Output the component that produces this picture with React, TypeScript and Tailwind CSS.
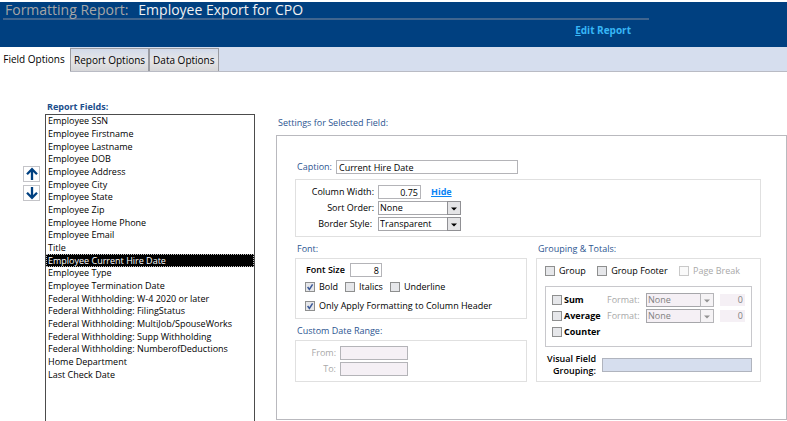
import { FC, ReactNode, useState } from "react";
import clsx from "clsx";

const FIELDS = [
	"Employee SSN",
	"Employee Firstname",
	"Employee Lastname",
	"Employee DOB",
	"Employee Address",
	"Employee City",
	"Employee State",
	"Employee Zip",
	"Employee Home Phone",
	"Employee Email",
	"Title",
	"Employee Current Hire Date",
	"Employee Type",
	"Employee Termination Date",
	"Federal Withholding: W-4 2020 or later",
	"Federal Withholding: FilingStatus",
	"Federal Withholding: MultiJob/SpouseWorks",
	"Federal Withholding: Supp Withholding",
	"Federal Withholding: NumberofDeductions",
	"Home Department",
	"Last Check Date",
];

const TABS = ["Field Options", "Report Options", "Data Options"];

const inputStyle =
	"h-[14px] border border-[#b4b4b8] bg-white px-0.5 leading-3 outline-none disabled:bg-[#f5f0f5]";

const Check: FC<{
	label: string;
	checked?: boolean;
	disabled?: boolean;
	bold?: boolean;
}> = ({ label, checked, disabled, bold }) => (
	<label
		className={clsx(
			"flex items-center whitespace-nowrap",
			bold ? "gap-0.5 font-bold text-black" : "gap-1",
			disabled && "text-[#a9a9a9]"
		)}
	>
		<span className="relative flex">
			<input
				type="checkbox"
				defaultChecked={checked}
				disabled={disabled}
				className="peer size-[10px] appearance-none border border-[#8e8f8f] bg-[#e6e7ea] disabled:border-[#c9c9c9] disabled:bg-[#fafafa]"
			/>
			<svg
				viewBox="0 0 10 10"
				className="pointer-events-none absolute inset-0 hidden size-[10px] peer-checked:block"
			>
				<path
					d="M2.6 5 4.4 7.4 7.6 2.4"
					fill="none"
					stroke="#3b5998"
					strokeWidth="1.5"
				/>
			</svg>
		</span>
		{label}
	</label>
);

const Select: FC<{
	id: string;
	value: string;
	options: string[];
	disabled?: boolean;
	className: string;
}> = ({ id, value, options, disabled, className }) => (
	<div className={clsx("relative flex", className)}>
		<select
			id={id}
			defaultValue={value}
			disabled={disabled}
			className="h-[14px] w-full appearance-none border border-[#a6a6aa] bg-white pl-px leading-3 outline-none disabled:bg-[#f5f0f5] disabled:text-[#808080] disabled:opacity-100"
		>
			{options.map((option) => (
				<option key={option}>{option}</option>
			))}
		</select>
		<span
			className={clsx(
				"pointer-events-none absolute inset-y-0 right-0 flex w-[14px] items-center justify-center border",
				disabled
					? "border-[#b5b5b8] bg-[#f5f3f5] text-[#929292]"
					: "border-[#909094] bg-[#e4e4e6] text-black"
			)}
		>
			<svg viewBox="0 0 6 4" className="mt-0.5 h-1 w-1.5">
				<path d="M0 0.5h6L3 3.6z" fill="currentColor" />
			</svg>
		</span>
	</div>
);

const MoveButton: FC<{ label: string; down?: boolean }> = ({ label, down }) => (
	<button
		aria-label={label}
		className="flex h-4 w-[17px] items-center justify-center border border-[#c4c4c8] bg-white"
	>
		<svg
			viewBox="0 0 14 14"
			className={clsx("size-[14px] shrink-0", down && "rotate-180")}
		>
			<path
				d="M7 13V2.2M2 7.2 7 2.2 12 7.2"
				fill="none"
				stroke="#004080"
				strokeWidth="2.3"
			/>
		</svg>
	</button>
);

const Heading: FC<{ children: ReactNode }> = ({ children }) => (
	<h2 className="px-0.5 text-[#2c5591]">{children}</h2>
);

const Total: FC<{ label: string }> = ({ label }) => {
	const id = `${label.toLowerCase()}-format`;

	return (
		<div className="flex items-center">
			<div className="w-[55px]">
				<Check label={label} bold />
			</div>
			<label htmlFor={id} className="w-[39px] text-[#a9a9a9]">
				Format:
			</label>
			<Select
				id={id}
				value="None"
				options={["None", "Currency", "Fixed"]}
				disabled
				className="w-[68px]"
			/>
			<input
				aria-label={`${label} decimals`}
				defaultValue="0"
				disabled
				className="ml-1.5 h-3 w-[25px] bg-[#f5f0f5] px-0.5 text-right text-[#808080]"
			/>
		</div>
	);
};

export default function App() {
	const [tab, setTab] = useState("Field Options");
	const [field, setField] = useState("Employee Current Hire Date");

	return (
		<div className="flex h-screen flex-col overflow-hidden bg-white pt-0.5 font-['Open_Sans',sans-serif] text-[9px] leading-[14px] text-black">
			<header className="h-[45px] shrink-0 bg-[#004080] pl-[3px]">
				<div className="w-[646px] max-w-full border-b-2 border-[#40658f]">
					<h1 className="flex h-4 items-center gap-2.5 px-0.5 text-[14px] whitespace-nowrap">
						<span className="text-[#a6a6a6]">Formatting Report:</span>
						<span className="text-[#f2f2f2]">Employee Export for CPO</span>
					</h1>
					<div className="relative">
						<a
							href="#edit"
							className="absolute top-[5px] right-[18px] text-[10px] font-bold text-[#37b6f6]"
						>
							<span className="underline">E</span>dit Report
						</a>
					</div>
				</div>
			</header>

			<nav
				role="tablist"
				className="flex h-[25px] shrink-0 border-b border-[#b9bbc4] bg-[#d6deee] text-[10px] text-black"
			>
				{TABS.map((name) => (
					<button
						key={name}
						role="tab"
						aria-selected={name === tab}
						onClick={() => setTab(name)}
						className={clsx(
							"whitespace-nowrap",
							name === tab
								? "-mb-px w-[70px] bg-white pr-0.5 pb-0.5"
								: "mt-px border border-b-0 border-[#9a9ba1] bg-linear-to-b from-[#d2daea] via-[#e6e6e8] to-[#d6d6d8] px-[3px]"
						)}
					>
						{name}
					</button>
				))}
			</nav>

			<main className="flex min-h-0 grow pl-[23px]">
				<div className="flex w-[22px] shrink-0 flex-col gap-[3px] pt-[94px]">
					<MoveButton label="Move up" />
					<MoveButton label="Move down" down />
				</div>

				<section className="flex w-[210px] shrink-0 flex-col pt-7">
					<h2 className="px-0.5 font-bold text-[#1c4e8c]">Report Fields:</h2>
					<div className="grow border border-b-0 border-[#4c4c4c]">
						<ul
							role="listbox"
							aria-label="Report Fields"
							className="grid h-[266px] auto-rows-fr"
						>
							{FIELDS.map((name) => (
								<li
									key={name}
									role="option"
									aria-selected={name === field}
									onClick={() => setField(name)}
									className={clsx(
										"flex items-center px-0.5 leading-3 whitespace-nowrap",
										name === field &&
											"bg-black text-white outline-1 -outline-offset-1 outline-dotted outline-[#c0c0c0]"
									)}
								>
									{name}
								</li>
							))}
						</ul>
					</div>
				</section>

				<section className="ml-[21px] min-w-0 grow pt-11">
					<Heading>Settings for Selected Field:</Heading>
					<div className="mt-[5px] h-[285px] border border-[#b9b9be] px-[18px] pt-6 pr-[25px]">
						<div className="flex items-center gap-1">
							<label htmlFor="caption" className="w-[37px] pl-0.5 text-[#2c5591]">
								Caption:
							</label>
							<input
								id="caption"
								defaultValue="Current Hire Date"
								className={clsx(inputStyle, "w-[182px]")}
							/>
						</div>

						<div className="mt-[5px] grid grid-cols-[78px_1fr] gap-x-1 gap-y-0.5 border border-[#e0e0e0] py-[5px]">
							<label htmlFor="width" className="text-right">
								Column Width:
							</label>
							<div className="flex">
								<input
									id="width"
									defaultValue="0.75"
									className={clsx(inputStyle, "w-[43px] text-right")}
								/>
								<a
									href="#hide"
									className="ml-2.5 font-bold text-[#0a84f5] underline"
								>
									Hide
								</a>
							</div>
							<label htmlFor="sort" className="text-right">
								Sort Order:
							</label>
							<Select
								id="sort"
								value="None"
								options={["None", "Ascending", "Descending"]}
								className="w-[83px]"
							/>
							<label htmlFor="border" className="pr-0.5 text-right">
								Border Style:
							</label>
							<Select
								id="border"
								value="Transparent"
								options={["Transparent", "Solid"]}
								className="w-[83px]"
							/>
						</div>

						<div className="mt-[5px] grid grid-cols-[232fr_225fr] gap-[9px]">
							<div className="flex flex-col">
								<Heading>Font:</Heading>
								<div className="mt-0.5 flex h-[61px] flex-col border border-[#e0e0e0] px-[9px] pt-1">
									<div className="flex items-center gap-1.5">
										<label
											htmlFor="size"
											className="w-[39px] pl-px font-semibold whitespace-nowrap text-black"
										>
											Font Size
										</label>
										<input
											id="size"
											defaultValue="8"
											className={clsx(inputStyle, "w-8 text-right")}
										/>
									</div>
									<div className="flex h-5 items-center gap-[7px]">
										<Check label="Bold" checked />
										<Check label="Italics" />
										<Check label="Underline" />
									</div>
									<div className="flex h-[18px] items-center">
										<Check label="Only Apply Formatting to Column Header" checked />
									</div>
								</div>
								<div className="mt-[5px]">
									<Heading>Custom Date Range:</Heading>
								</div>
								<div className="mt-0.5 grid grid-cols-[40px_68px] gap-x-1 gap-y-0.5 border border-[#e0e0e0] py-[5px] text-right text-[#a9a9a9]">
									<label htmlFor="from">From:</label>
									<input id="from" disabled className={inputStyle} />
									<label htmlFor="to">To:</label>
									<input id="to" disabled className={inputStyle} />
								</div>
							</div>

							<div className="flex flex-col">
								<Heading>Grouping &amp; Totals:</Heading>
								<div className="mt-0.5 grow border border-[#e0e0e0] px-2 pt-1">
									<div className="flex h-4 items-center justify-between pr-3">
										<Check label="Group" />
										<Check label="Group Footer" />
										<Check label="Page Break" disabled />
									</div>
									<div className="mt-[7px] flex h-[61px] flex-col gap-0.5 border border-[#c8c8cc] px-1.5 pt-1.5">
										<Total label="Sum" />
										<Total label="Average" />
										<Check label="Counter" bold />
									</div>
									<div className="mt-1.5 flex items-center gap-1.5">
										<label
											htmlFor="visual"
											className="w-[51px] text-right leading-3 font-semibold whitespace-nowrap text-black"
										>
											Visual Field
											<br />
											Grouping:
										</label>
										<input
											id="visual"
											className="h-[14px] min-w-0 grow border border-[#b0b4be] bg-[#d6deee]"
										/>
									</div>
								</div>
							</div>
						</div>
					</div>
				</section>
			</main>
		</div>
	);
}
